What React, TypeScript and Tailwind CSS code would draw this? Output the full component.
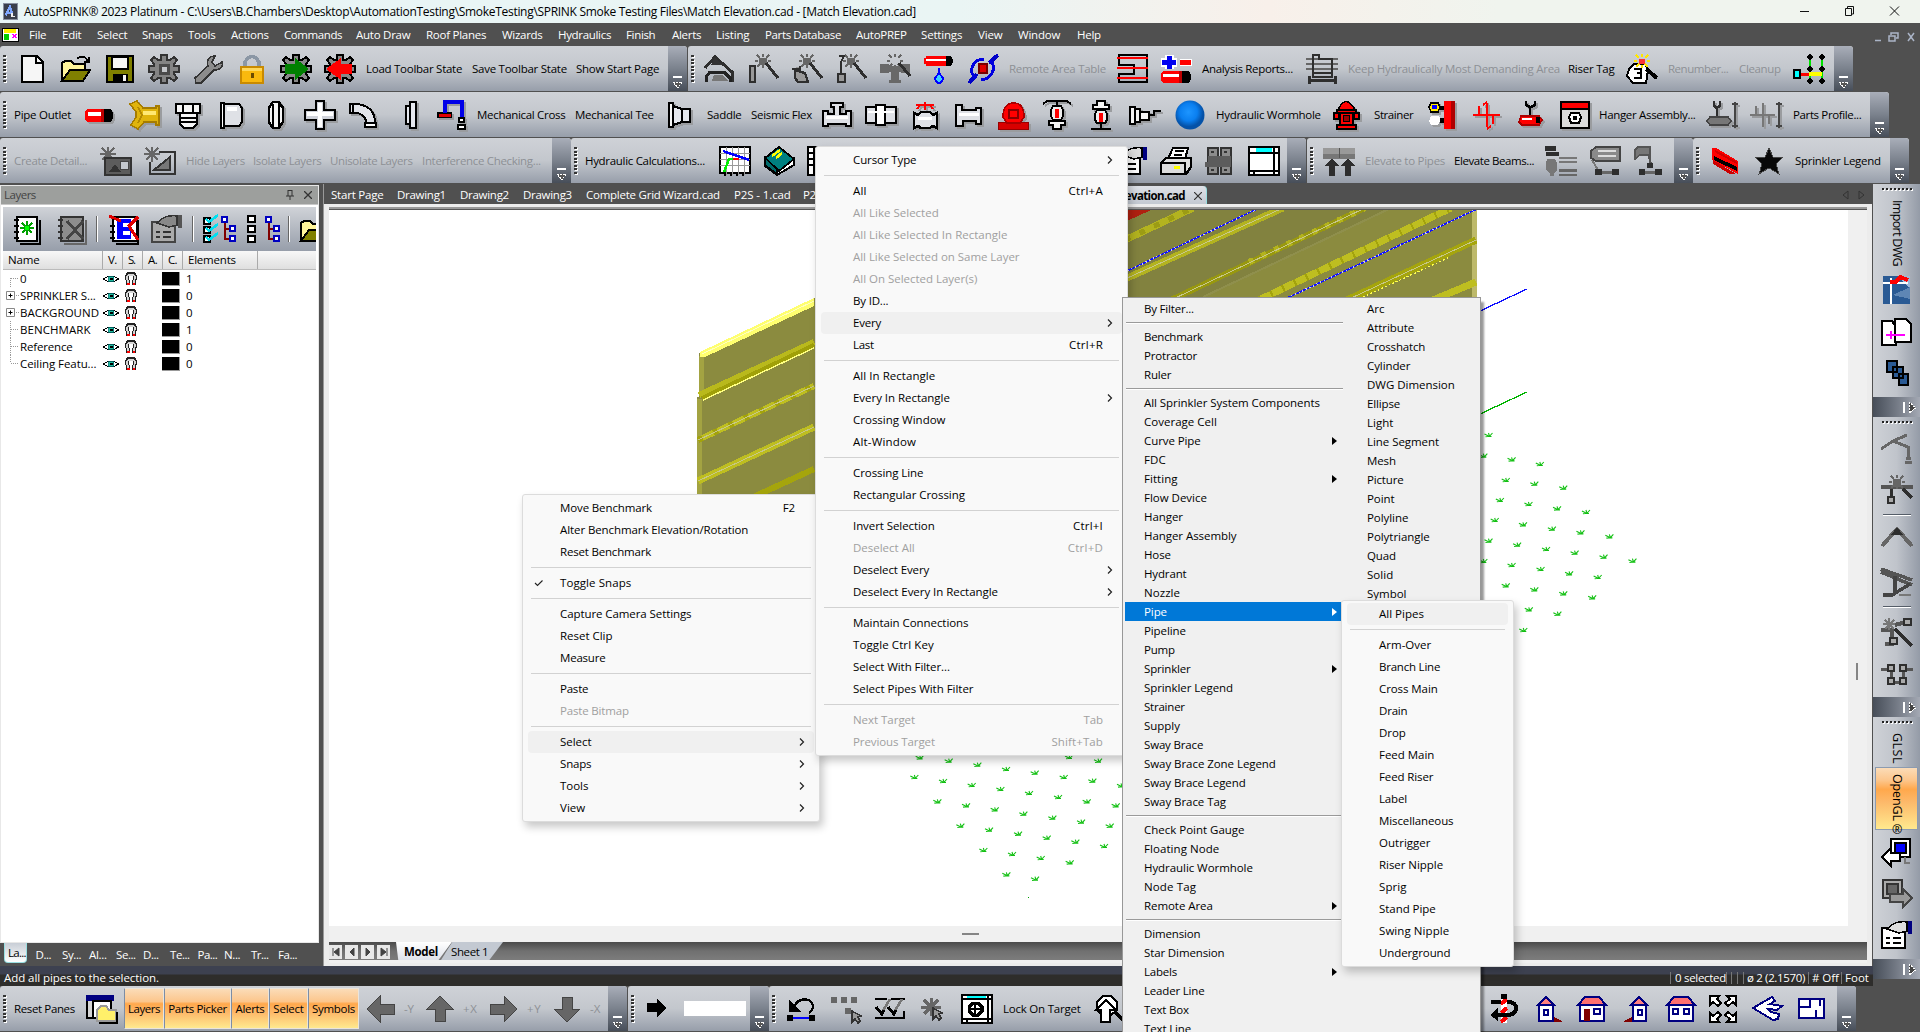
import React, { useLayoutEffect, useRef } from "react";

/* ---------- text ---------- */

const ADVANCE: Record<string, number> = {
  " ": 561, a: 1042, b: 1204, c: 946, d: 1206, e: 1071, f: 641, g: 1206, h: 1159, i: 496, j: 496, k: 1018, l: 496,
  m: 1764, n: 1159, o: 1200, p: 1204, q: 1206, r: 711, s: 869, t: 694, u: 1159, v: 981, w: 1479, x: 940, y: 991,
  z: 926, A: 1321, B: 1174, C: 1268, D: 1436, E: 1036, F: 999, G: 1406, H: 1454, I: 545, J: 731, K: 1188, L: 963,
  M: 1839, N: 1532, O: 1544, P: 1147, Q: 1544, R: 1225, S: 1088, T: 1073, U: 1407, V: 1272, W: 1913, X: 1208,
  Y: 1133, Z: 1169, ".": 444, "-": 819, "(": 618, ")": 618, "+": 1401, "/": 797, "#": 1210, "®": 1700, "ø": 1200,
};

function T({ t, size = 12, w, className = "" }: { t: string; size?: number; w?: number; className?: string }) {
  const ref = useRef<HTMLSpanElement>(null);
  useLayoutEffect(() => {
    const el = ref.current!;
    el.style.letterSpacing = "0px";
    const r = el.getBoundingClientRect();
    const natural = Math.max(r.width, r.height);
    let units = 0;
    for (const ch of t) units += ADVANCE[ch] ?? 1104;
    const target = w ?? (units / 2048) * size;
    el.style.letterSpacing = `${(target - natural) / t.length}px`;
  }, [t, size, w]);
  return (
    <span ref={ref} className={`inline-block whitespace-pre leading-none ${className}`}>
      {t}
    </span>
  );
}

/* ---------- icons (32 x 30 grid) ---------- */

type Shape = [string, string, string?, number?];
const K = "#000";
const G1 = "#2e2e2e";
const G2 = "#666";
const G3 = "#999";
const W = "#f6f6f6";
const R = "#f00";
const N = "#000080";
const gearPath = "M13 1h6v5h3l4-3 3 3-3 4v2h5v6h-5v2l3 4-3 3-4-3h-3v5h-6v-5h-3l-4 3-3-3 3-4v-2H1v-6h5v-2L3 6l3-3 4 3h3z";
const rays = "M16 0v3M16 11v3M8 7h3M21 7h3M10 1l3 3M22 1l-3 3M10 13l3-3M22 13l-3-3";

const ICONS: Record<string, Shape[]> = {
  app: [["M2 1h28v28H2z", "#3a3f4c", "#8890a0", 2], ["M7 22L16 6l4 12M10 18h10", "none", "#7fa8ff", 4], ["M20 18v6h5", "none", "#eee", 3]],
  doc0: [["M1 3h30v25H1z", "#fff", K, 2], ["M3 4h24v7H3z", "#ffee00"], ["M4 14h10v12H4z", "#0c0"], ["M20 14l8 8M28 14l-8 8", "none", "#f0f", 3]],
  new: [["M6 2h15l6 6v20H6z", W, K, 2], ["M20 2v7h7", "none", K, 2]],
  open: [["M2 27V9l3-2h6l3 3h11v5", "#fff59a", K, 2], ["M2 27l8-11h20l-7 11z", "#808000", K, 2], ["M17 5c4-4 9-3 11 3M24 8h5V3", "none", K, 2]],
  save: [["M3 2h26v26H3z", "#808000", K, 2.5], ["M8 3h16v12H8z", W, K, 1.5], ["M9 20h15v8H9z", K], ["M19 21h3v6h-3z", W]],
  gear: [[gearPath, "#848484", "#333", 2], ["M12 11h8v8h-8z", "#c4c6ca", "#4a4a4a", 3]],
  wrench: [["M3 24L16 12c-2-5 1-10 7-10l-3 6 3 4 7-4c2 4-3 9-8 8L9 29H4z", "#8c8c8c", "#333", 1.5]],
  lock: [["M9 15V8q7-11 14 0v7", "none", "#8b97a5", 3.5], ["M5 13h22v16H5z", "#f9b90e", "#c98a00", 1.5], ["M6 14h20v3H6z", "#ffd85a"], ["M15 19h3v5h-3z", "#6b4a00"]],
  gearG: [[gearPath, "#888", K, 2], ["M5 10h10V4l14 11-14 11v-6H5z", "#008000"]],
  gearR: [[gearPath, "#888", K, 2], ["M28 10H17V4L2 15l15 11v-6h11z", R]],
  plan: [["M2 14L12 3l17 15v10", "none", G1, 3], ["M12 3l7 8H8z", "#333"], ["M3 28v-5l4-5h14l6 6v4", "none", "#222", 3], ["M11 21h9l5 6H9z", "#777"]],
  wand1: [[rays, "none", G2, 2], ["M12 4h8v7h-8z", G2], ["M19 9l12 15", "none", G1, 3], ["M3 12h5v16H3z", G3, G1, 2]],
  wand2: [[rays, "none", G2, 2], ["M12 4h8v7h-8z", G2], ["M19 9l12 15", "none", G1, 3], ["M1 15h8v-3M4 16l10 3 3 9H7l-3-4z", G3, G1, 2.5]],
  wand3: [[rays, "none", G2, 2], ["M12 4h8v7h-8z", G2], ["M19 9l12 15", "none", G1, 3], ["M4 2h5l-3 6v11", "none", G1, 2], ["M3 20h7v8H3z", G3, G1, 2]],
  wand4: [[rays, "none", G2, 2], ["M1 10h9v2h12v-2h9v9h-9v-1h-2v8h2v3H10v-3h2v-8h-2v1H1z", "#686868"], ["M20 9l11 13", "none", G1, 3]],
  pipeDrop: [["M3 2h23v10H3z", R], ["M1 4h3v6H1z", R], ["M3 5h20v2H3z", "#fff"], ["M23 2h5q4 5 0 10h-5z", K], ["M16 14v5l4 5q-1 5-4 5t-4-5l4-5", "#3bd0ff", "#00f", 2]],
  orbit: [["M2 29L10 20M22 9L31 1", "none", "#0000c8", 4], ["M9 24C0 18 6 5 17 5M23 6c8 8 1 19-9 20", "none", "#0000e0", 3], ["M12 10h8v9h-8z", "#e00000", "#700", 1.5]],
  table: [["M3 1h28v27H3v-8h15v-9H3z", "none", K, 2.5], ["M1 4h31M1 14h31M1 24h31", "none", R, 2.5]],
  plusPipe: [["M1 8h16M9 1v14", "none", "#fff", 9], ["M2 8h14M9 2v13", "none", "#0000f0", 5], ["M20 5h12v7H20z", "#fff"], ["M20 6h11v5H20z", R], ["M3 17h22v12H3l-2-3v-6z", R], ["M3 20h19v3H3z", "#fff"], ["M21 17h8q4 6 0 12h-8z", K], ["M19 17h3v12h-3z", "#b00"]],
  gridGray: [["M0 5h32M0 10h32M0 15h32", "none", G2, 2.5], ["M7 1h6v4h13v18H7z", "none", G1, 2], ["M7 19h19", "none", G1, 2], ["M2 26h28M3 22v8M29 22v8", "none", G1, 3]],
  bulb3: [["M8 10h11l3 6-2 13H7L1 22l2-7z", "#fff", K, 2], ["M20 15l11 9", "none", K, 4], [rays, "none", "#ffe600", 2.5], ["M13 5h6v5h-6z", "#f33"], ["M8 15h7v4h-4 4v5H8", "none", K, 2]],
  riser: [["M6 20h11", "none", R, 3], ["M17 20V3M29 20V3M17 20v7M29 20v7", "none", "#00e000", 2.5], ["M16 20h13", "none", "#ff0", 4], ["M1 16h6v8H1z", "#0ff", K, 1.5], ["M17 1l2 2-2 2-2-2zM29 1l2 2-2 2-2-2zM17 13l2 2-2 2-2-2zM29 13l2 2-2 2-2-2zM17 25l2 2-2 2-2-2zM29 25l2 2-2 2-2-2z", W, K, 1.5]],
  pipe: [["M3 9h20v13H3l-2-3v-7z", R], ["M4 12h17v4H4z", "#fff"], ["M19 9h8q4 6 0 13h-8z", K], ["M17 9h3v13h-3z", "#b00"]],
  goldTee: [["M2 4l7-3 6 7h13V6h3v19h-3v-3H16l-6 7-7-4 5-8V12z", "#e0b40c", "#a67c00", 1.5], ["M15 11h13v4H15z", "#ffe872"], ["M10 7l4 8-4 8", "none", "#b48a00", 2]],
  cap: [["M4 4h24v9H4z", W, K, 2.5], ["M11 4v8M21 4v8", "none", K, 2], ["M8 13h17v11l-4 4H12l-4-4z", W, K, 2.5], ["M9 18h16M9 22h16", "none", K, 2]],
  halfD: [["M5 3h3v25H5z", "#fff", K, 2], ["M8 4h15l3 4v14l-3 4H8z", "#dfe1e6", K, 2], ["M11 7h10v4H11z", "#fff"]],
  oval: [["M13 2h6l4 6v14l-4 6h-6l-4-6V8z", W, K, 2.5], ["M13 4v23M19 4v23", "none", K, 1.5]],
  cross: [["M12 1h8v9h11v10H20v9h-8v-9H1V10h11z", "#cfd2da", K, 2.5], ["M16 3v24M3 14h26", "none", "#fff", 4]],
  elbow: [["M2 4h7q18 2 18 19h-8Q16 13 8 13H2z", "#e2e4ea", K, 2], ["M5 3v11M17 23h11v4H17z", "#fff", K, 1.5]],
  disc: [["M18 2h6v26h-6zM14 6h4v18h-4z", "#e6e8ee", K, 2]],
  dropArm: [["M1 15h15", "none", K, 6], ["M3 15h12", "none", "#e00000", 3], ["M9 13V2h17v15", "none", "#0000e8", 4], ["M23 18h5v4h-5zM22 25h7v4h-7z", "#fff", K, 1.5]],
  reducer: [["M3 3h4v24H3z", W, K, 2], ["M7 6l9 3v13l-9 3zM16 9h8v13h-8z", "#e6e8ee", K, 2]],
  tee: [["M2 11h5v3h6V7h-3V3h12v4h-3v7h6v-3h5v15h-5v-2H7v2H2z", "#dfe1e6", K, 2.5], ["M5 17h22", "none", "#fff", 3]],
  coupling: [["M1 7h10v16H1zM20 7h11v16H20z", "#dfe1e6", K, 2.5], ["M11 5h9v20h-9z", "#fff", K, 2.5], ["M3 12h26", "none", "#fff", 2]],
  sprayT: [["M7 5h18M8 9l4-5M24 9l-4-5M16 2v8", "none", R, 2], ["M5 13l4 2 3-3h9l3 3 4-2v15l-4-2-3 2h-9l-3-2-4 2z", "#dfe1e6", K, 2.5], ["M9 18h14", "none", "#fff", 3]],
  teeS: [["M3 5h6v5h14V8h5v16h-5v-3H10v5H3z", "#dfe1e6", K, 2.5], ["M6 14h20", "none", "#fff", 3]],
  redBell: [["M1 22h30v7H1z", "#d80000", "#900", 1], ["M6 17q0-14 11-14 10 0 10 14l-4 6H10z", R, "#a00", 1.5], ["M12 10h9v8h-9z", "none", "#800", 2]],
  sprU: [["M2 4l4-3h20l4 3M16 1v4", "none", K, 2], ["M12 6h8l2 4v6l-2 4h-8l-2-4v-6z", "#eee", K, 2], ["M14 9h4v9h-4z", R], ["M8 21h16v4h-4v4h-8v-4H8z", W, K, 2]],
  sprD: [["M12 1h8v4h4v4H8V5h4z", W, K, 2], ["M12 10h8l2 4v6l-2 3h-8l-2-3v-6z", "#eee", K, 2], ["M14 13h4v9h-4z", R], ["M6 29h20M16 24v5", "none", K, 2]],
  sprSide: [["M1 7h5v17H1zM6 9h5v13H6zM11 12h9v8h-9z", W, K, 2], ["M20 15h5v-4h7", "none", K, 2]],
  hydrant: [["M9 8q7-13 15 0v3H9z", R, K, 1.5], ["M7 10h19v3H7zM10 13h13v12H10z", R, K, 1.5], ["M4 13h5v6H4zM24 13h5v6h-5z", R, K, 2], ["M7 25h19v4H7z", R, K, 1.5], ["M13 15h6v6h-6z", "#900", K, 1]],
  gauge: [["M17 1h11v28H17z", R], ["M24 1h4v28h-4z", "#b00000"], ["M4 3h7l2 4-2 5H4L2 7z", "#ffea00", K, 1.5], ["M5 5h5v4H5z", "#00f"], ["M4 16h8l2 4-3 5H4l-2-4z", "#fff"], ["M13 6h4v4h-4zM13 18h4v5h-4z", K]],
  brace: [["M16 3v24M2 15h27M8 6v8M22 16v8M12 5l4-3M20 26l-4 3", "none", R, 2]],
  clevis: [["M11 1v4l4 2v10M20 1v4l-4 2", "none", K, 2.5], ["M6 16h18l3 4-3 5H7l-3-3z", R, "#a00", 1.5], ["M7 18h10v2H7z", "#fff"], ["M21 17h4v6h-4z", K]],
  plate: [["M2 2h28v26H2z", "#dcdcdc", K, 2.5], ["M3 3h26v5H3z", R], ["M2 9h28", "none", K, 1.5], ["M12 13h8l2 4-2 6h-8l-2-6z", "#fff", K, 2], ["M14 16h4v4h-4z", K]],
  hangG: [["M8 1v5l3 2v10M14 1v5l-3 2", "none", G1, 2.5], ["M4 17h18l3 4-3 4H4l-3-4z", "#777", "#444", 1.5], ["M29 2v26M26 4h6M26 26h6", "none", "#444", 2]],
  braceG: [["M13 3v24M0 15h25M6 6v8M19 16v8", "none", "#777", 2], ["M29 2v26M26 4h6M26 26h6", "none", "#444", 2]],
  detail1: [["M8 1v15M0 8h16M2 2l12 12M14 2L2 14", "none", "#666", 2], ["M5 12h26v17H5z", "#5c5c5c", "#333", 2], ["M20 15h8v8h-8z", "#c4c8ce", "#444", 1], ["M9 26l6-8 6 8z", "#333"]],
  detail2: [["M8 1v15M0 8h16M2 2l12 12M14 2L2 14", "none", "#666", 2], ["M15 6h16v22H6V16", "none", "#333", 2.5, ], ["M10 24L26 11v13z", "#777", "#333", 2]],
  graph: [["M1 1h30v26H1z", "#fff", K, 2], ["M7 1v28M13 1v28M19 1v28M25 1v28M1 7h30M1 13h30M1 19h30", "none", "#999", 1], ["M4 5l26 9", "none", "#00f", 2.5], ["M5 26l5-13h4", "none", "#0e0", 2.5], ["M14 13h6", "none", R, 2], ["M6 27v3M12 27v3M18 27v3M24 27v3", "none", K, 2]],
  book: [["M2 12L16 1l15 12-15 12z", "#008080", K, 2], ["M2 12v8l12 9 17-10v-6L16 25z", "#fff", K, 2], ["M2 12v7l12 9v-5z", "#006a6a", K, 1.5], ["M9 10l8-6M13 12l6-5", "none", "#ff0", 2.5]],
  sheet: [["M1 1h30v28H1z", "#fff", K, 2], ["M7 1v28M13 1v28M19 1v28M1 7h30M1 13h30M1 19h30", "none", K, 1.5]],
  props: [["M1 8h23v20H1z", "#fff", K, 2.5], ["M6 9q8-9 20-7v9l-8 2z", "#ddd", K, 1.5], ["M27 1h4v13h-4z", N], ["M5 18h4M12 18h8M5 23h4M12 23h8", "none", K, 2]],
  printer: [["M8 13l5-11h15l-3 11z", "#fff", K, 2], ["M15 5h9M14 9h8", "none", K, 1.5], ["M1 17l5-5h25v9l-5 7H1z", "#ddd", K, 2.5], ["M14 20h6v3h-6z", "#ff0"], ["M2 17h23v10", "none", K, 1.5]],
  doorsG: [["M4 2h10v26H4zM17 2h10v26H17z", "#8c8c8c", "#333", 2], ["M4 10h23v11H1v-5h3z", "#5c5c5c"], ["M7 5h3v2H7zM20 5h3v2h-3zM7 23h3v2H7zM20 23h3v2h-3z", "#333"]],
  win: [["M1 1h30v28H1z", "#fff", K, 2.5], ["M1 7h30M1 25h30M6 25v4M26 1v28", "none", K, 2], ["M8 2h16v4H8z", "#0ff"]],
  elev: [["M0 2h32v6H0z", "#999"], ["M0 8h32v5H0z", "#777"], ["M16 2v10", "none", "#555", 1], ["M2 20l7-8 7 8h-4v10H6V20zM18 20l7-8 7 8h-4v10h-6V20z", G1]],
  elevB: [["M0 0h11v5H0zM1 6h13v4H1z", G1], ["M2 13h8l2 4v7l-3 3v3H5v-3l-4-3v-7z", "#777"], ["M14 12h18M14 16h18", "none", "#777", 2], ["M14 23h18v3H14zM14 28h18v2H14z", "#666"]],
  roll: [["M7 1h24v14H7l-5-3V5z", "#8a8a8a", "#444", 2], ["M9 5h18M9 10h18", "none", "#ddd", 1.5], ["M3 14l6 10", "none", "#777", 2], ["M6 23h7v6H6zM23 23h7v6h-7z", G1], ["M13 26h10", "none", "#666", 3]],
  roll2: [["M5 1h12v8H7l-5 4V4z", "#777", "#555", 1.5], ["M16 9l2 11", "none", "#555", 2.5], ["M14 17h6v5h-6zM6 23h6v6H6zM22 23h7v6h-7z", G1], ["M12 26h10", "none", "#666", 3]],
  beam: [["M3 2h4l22 13v13L3 14z", R], ["M5 10l23 11v4L5 14z", K], ["M4 14l23 14h-6L4 18z", "#c00"], ["M6 5l22 12", "none", "#d00000", 2]],
  star: [["M16 2l4 9h10l-7 7 3 10-10-6-10 6 3-10-7-7h10z", "#080808", "#444", 1]],
  lNew: [["M6 3h20v24H6z", "#fff", K, 2.5], ["M29 6v24H9", "none", K, 2], ["M3 6h5M3 12h5M3 18h5M3 24h5", "none", K, 2.5], ["M16 7v14M9 14h14M11 9l10 10M21 9L11 19", "none", "#00a000", 1.5], ["M14 12h4v4h-4z", "#0f0"]],
  lDel: [["M6 3h22v24H6z", "#8d8d8d", "#333", 2.5], ["M31 6v24H9", "none", "#666", 2], ["M3 6h5M3 12h5M3 18h5M3 24h5", "none", "#333", 2.5], ["M12 7l16 18M28 7L12 25", "none", "#444", 3]],
  lRename: [["M6 3h24v24H6z", "#fff", K, 2.5], ["M31 6v24H9", "none", K, 2], ["M3 12h5M3 18h5M3 24h5", "none", K, 2.5], ["M10 5h14v20H10z", "#00f"], ["M16 9h7v4h-7zM16 17h7v4h-7z", "#fff"], ["M2 2l12 5M31 3l-9 9 9 14", "none", "#e00000", 3]],
  propsG: [["M1 8h23v20H1z", "#aaa", "#444", 2], ["M6 9q8-9 20-7v9l-8 2z", "#888", "#333", 1.5], ["M27 1h4v13h-4z", "#555"], ["M5 18h4M12 18h8M5 23h4M12 23h8", "none", "#333", 2]],
  checks: [["M1 4h6v6H1zM1 13h6v6H1zM1 22h6v6H1z", "#fff", K, 2], ["M3 5l3 3 9-7M3 14l3 3 9-7M3 23l3 3 9-7", "none", "#00e0f0", 2.5], ["M22 6v19h6M22 15h6", "none", "#800000", 2], ["M19 3h5v5h-5zM27 12h5v5h-5zM27 22h5v5h-5z", "#fff", "#0000c0", 2]],
  boxes: [["M1 2h7v6H1zM1 12h7v6H1zM1 22h7v6H1z", "#fff", K, 2], ["M22 6v19h6M22 15h6", "none", "#800000", 2], ["M19 3h5v5h-5zM27 12h5v5h-5zM27 22h5v5h-5z", "#fff", "#0000c0", 2]],
  panes: [["M1 2h22v22H1z", "#d4d4d4", K, 2], ["M0 1h28v6H0z", N], ["M7 7h18v17H7z", "#fff", K, 2], ["M11 16l4-4h5l3 4h7v11H11z", "#fff06a", "#999", 2], ["M31 18v11H13", "none", K, 2]],
  aL: [["M1 15L14 2v8h14v10H14v8z", "#666", "#444", 1]],
  aU: [["M16 2l13 13h-8v12H11V15H3z", "#666", "#444", 1]],
  aR: [["M29 15L16 2v8H2v10h14v8z", "#666", "#444", 1]],
  aD: [["M16 28L3 15h8V3h10v12h8z", "#666", "#444", 1]],
  undo: [["M7 13C12 2 25 4 26 12q0 4-4 7", "none", K, 2.5], ["M2 6v12h12z", K], ["M4 24h22", "none", "#00f", 2.5], ["M0 21h6v6H0zM22 21h6v6h-6z", K]],
  pick3: [["M0 3h6v6H0zM10 3h6v6h-6zM20 3h6v6h-6zM14 14h6v6h-6z", "#666"], ["M21 17v11l3-3 3 4 2-2-2-4 3-1z", "#999", "#333", 1.5]],
  checkW: [["M0 5h12M16 5h14M0 24h30M29 17v8", "none", K, 2], ["M6 20L15 5M18 20l9-15", "none", "#777", 2.5], ["M1 13l6 7 2-4M13 13l6 7 2-4", "none", K, 3]],
  burst: [["M12 4v18M2 13h20M5 6l14 14M19 6L5 20", "none", "#666", 3], ["M14 14v11l3-3 3 4 2-2-2-4 3-1z", "#999", "#333", 1.5]],
  target: [["M1 1h30v28H1z", "#fff", K, 2.5], ["M1 5h30M1 25h30M6 25v4M27 1v28", "none", K, 2], ["M6 2h19v2H6z", "#0ff"], ["M12 9h5l4 4v4l-4 4h-5l-4-4v-4z", "#fff", K, 3], ["M14 9v6H8M14 21v-6h7", "none", K, 2.5]],
  zoomUp: [["M4 16V8l6-6h8l6 6v8l-6 5H9z", "#fff", K, 2], ["M13 6L3 16h5v12h9V16h6z", "#fff", K, 2], ["M22 18l9 9", "none", K, 4]],
  rotate: [["M12 3h6v26h-6z", "#fff"], ["M18 5l-6 5M18 14l-6 5M18 23l-6 5", "none", R, 4], ["M2 8h10M18 8q9 0 9 6 0 7-10 7H7", "none", K, 4], ["M9 14v13L1 21z", K], ["M12 0h6v5h-6z", K]],
  h1: [["M7 11h14v16H7z", "#fff", N, 2.5], ["M6 11l8-8 8 8z", "#ff8080", N, 2], ["M12 16h4v5h-4z", "#fff", N, 2], ["M22 23l8 4v1h-8z", "#800000"]],
  h2: [["M4 11h24v16H4z", "#fff", N, 2.5], ["M2 11l7-8h14l7 8z", "#ff7070", N, 2], ["M8 15h6v12H8z", "#800000"], ["M18 15h6v5h-6z", "#fff", N, 2]],
  h3: [["M11 11h13v16H11z", "#fff", N, 2.5], ["M9 11l8-8 8 8z", "#ff8080", N, 2], ["M16 16h4v5h-4z", "#fff", N, 2], ["M10 23l-8 4v1h8z", "#800000"]],
  h4: [["M4 11h24v16H4z", "#fff", N, 2.5], ["M2 11l7-8h14l7 8z", "#ff7070", N, 2], ["M8 15h5v5H8zM19 15h5v5h-5z", "#fff", N, 2]],
  expand: [["M1 2h9L8 5l4 4-3 3-5-4-3 3zM27 2h-9l3 3-5 4 3 3 5-4 3 3zM1 28h9l-2-3 4-4-3-3-5 4-3-3zM27 28h-9l3-3-5-4 3-3 5 4 3-3z", "#fff", K, 2]],
  iso: [["M1 14L20 3l3 4-5 3 12 2-5 4-9-1 3 3 8 2-1 5-5 1z", "#fff", N, 2]],
  floor: [["M2 5h25v19H2z", "#fff", N, 2.5], ["M2 13h7M13 5v8h-4M19 16v8M23 5v7", "none", N, 2.5]],
  dwg: [["M2 1h27v28H2z", "#2a5a94"], ["M16 1h13v12z", "#9db8d8"], ["M12 20l17-8v12z", "#5f86b4"], ["M10 3v26M2 8h25", "none", "#fff", 2], ["M9 7h6l4-5 8 3", "none", R, 4]],
  docs2: [["M1 4h10l4 5v19H1z", "#fff", K, 2.5], ["M14 2h11l5 5v18H14z", "#fff", K, 2.5], ["M5 18h19M10 14v8", "none", "#f0f", 2.5]],
  cubes: [["M6 2h10v11H6zM12 8h10v11H12zM18 15h9v11h-9z", "#2a5a94", K, 2]],
  v1: [["M0 16L12 8l14-6M12 8l15 6v12M24 29h7M25 25h5", "none", "#666", 3]],
  v2: [["M0 12h32", "none", "#555", 4], [rays, "none", "#666", 2], ["M12 4h8v8h-8z", "#666"], ["M10 14v10M22 14l9 9", "none", G1, 3], ["M7 22h6v6H7z", "#aaa", G1, 2]],
  v3: [["M1 24L16 7l15 17", "none", "#666", 4], ["M10 13l6-8 6 8z", G1]],
  v4: [["M0 2l31 11M0 5l31 13", "none", "#555", 3.5], ["M14 9v17M2 28h9l18-11", "none", "#444", 3.5], ["M18 28h12", "none", "#777", 2]],
  v5: [["M0 13h11v14H4M14 8l14-4", "none", "#555", 4], ["M8 1v12M2 7h12M4 3l9 9M13 3L4 12", "none", "#777", 1.5], ["M14 12l17 17", "none", G1, 4], ["M9 21h7v6H9zM23 2h7v6h-7z", "#aaa", G1, 2]],
  v6: [["M0 9h10v13h12V9h10", "none", "#555", 3], ["M7 5h6v6H7zM19 5h6v6h-6zM7 18h6v6H7zM19 18h6v6h-6z", "#aaa", G1, 2]],
  monL: [["M10 2h19v18H10z", "#fff", K, 2.5], ["M14 6h11v10H14z", "#00f", K, 2], ["M1 20l9-9v5h9v8h-9v5z", "#fff", K, 2], ["M24 20v6h5", "none", "#777", 2]],
  monR: [["M2 2h19v18H2z", "#aaa", "#333", 2.5], ["M6 6h11v10H6z", "#666", "#333", 2], ["M31 20l-9-9v5H9v8h13v5z", "#999", "#444", 2]],
  eye: [["M1 15Q16 1 31 15 16 29 1 15z", "#fff", K, 2.5], ["M11 9h10v12H11z", "#27c0a0", "#077", 2], ["M14 13h5v5h-5z", K]],
  magnet: [["M9 28V20Q1 6 16 5q15 1 7 15v8", "none", "#222", 8], ["M9 25V20Q2 8 16 7q14 1 7 13v5", "none", "#d4d4d4", 4], ["M7 24h6v4H7zM20 24h6v4h-6z", R]],
};

function Icon({ n, w = 32, h = 30, shadow }: { n: string; w?: number; h?: number; shadow?: boolean }) {
  return (
    <svg
      width={w}
      height={h}
      viewBox="0 0 32 30"
      preserveAspectRatio="none"
      shapeRendering="crispEdges"
      className={`block shrink-0 overflow-visible ${shadow ? "drop-shadow-[2px_2px_0_#9a9c9f]" : ""}`}
    >
      {ICONS[n].map(([d, fill, stroke, sw], i) => (
        <path key={i} d={d} fill={fill} stroke={stroke ?? "none"} strokeWidth={sw ?? 0} />
      ))}
    </svg>
  );
}

/* ---------- toolbars ---------- */

type Item = { x: number; t?: string; i?: string; dim?: boolean; el?: React.ReactNode };
const tx = (x: number, t: string, dim = false): Item => ({ x, t, dim });
const ic = (x: number, ...names: string[]): Item[] => names.map((i, k) => ({ x: x + k * 44, i }));

function Overflow() {
  return (
    <div className="flex h-full w-[19px] shrink-0 flex-col items-center justify-end rounded-tr bg-gradient-to-b from-[#a9aeb9] via-[#7b828d] to-[#474e59] pb-[2px]">
      <svg width="11" height="13" viewBox="0 0 11 13" shapeRendering="crispEdges">
        <path d="M1 1h9" stroke="#fff" strokeWidth="1.5" />
        <path d="M1 6h9L6 12z" fill="#555" stroke="#fff" strokeWidth="1" strokeDasharray="2 1" />
      </svg>
    </div>
  );
}

function Bar({ from, to, items, grip = true, shadow }: { from: number; to: number; items: Item[]; grip?: boolean; shadow?: boolean }) {
  const start = items[0].x - from - (grip ? 7 : 0);
  return (
    <div
      className="flex h-full shrink-0 overflow-hidden rounded-t-[3px] bg-gradient-to-b from-[#cfd2d7] via-[#c3c7cd] to-[#979eaa]"
      style={{ width: to - from }}
    >
      <div className="flex min-w-0 flex-1 items-center">
        {grip && (
          <div className="ml-[3px] flex w-1 shrink-0 flex-col gap-[1.6px]">
            {[0, 1, 2, 3, 4, 5, 6, 7].map((k) => (
              <i key={k} className="block h-[2px] w-[3px] bg-[#333] shadow-[1px_1px_0_#fff]" />
            ))}
          </div>
        )}
        <div className="shrink-0" style={{ width: start }} />
        {items.map((it, k) => {
          const next = items[k + 1]?.x;
          return (
            <div key={k} className="shrink-0" style={{ width: next ? next - it.x : undefined }}>
              {it.el ?? (it.i ? <Icon n={it.i} shadow={shadow} /> : <T t={it.t!} size={11.55} className={it.dim ? "text-[#8d9095]" : "text-black"} />)}
            </div>
          );
        })}
      </div>
      <Overflow />
    </div>
  );
}

const Ball = (
  <svg width="30" height="30" viewBox="0 0 30 30" className="block">
    <defs>
      <radialGradient id="ball" cx="0.45" cy="0.4">
        <stop offset="0" stopColor="#1d95ff" />
        <stop offset="0.6" stopColor="#0a7ff0" />
        <stop offset="1" stopColor="#0552a8" />
      </radialGradient>
    </defs>
    <circle cx="15" cy="15" r="14.5" fill="url(#ball)" />
  </svg>
);

const ROW1A = [...ic(16, "new", "open", "save", "gear", "wrench", "lock", "gearG", "gearR"), tx(366, "Load Toolbar State"), tx(472, "Save Toolbar State"), tx(576, "Show Start Page")];
const ROW1B = [
  ...ic(703, "plan", "wand1", "wand2", "wand3", "wand4", "pipeDrop", "orbit"), tx(1009, "Remote Area Table", true), ...ic(1116, "table", "plusPipe"),
  tx(1202, "Analysis Reports..."), ...ic(1306, "gridGray"), tx(1348, "Keep Hydraulically Most Demanding Area", true), tx(1568, "Riser Tag"),
  ...ic(1626, "bulb3"), tx(1668, "Renumber...", true), tx(1739, "Cleanup", true), ...ic(1793, "riser"),
];
const ROW2 = [
  tx(14, "Pipe Outlet"), ...ic(84, "pipe", "goldTee", "cap", "halfD", "oval", "cross", "elbow", "disc", "dropArm"), tx(477, "Mechanical Cross"),
  tx(575, "Mechanical Tee"), ...ic(666, "reducer"), tx(707, "Saddle"), tx(751, "Seismic Flex"),
  ...ic(821, "tee", "coupling", "sprayT", "teeS", "redBell", "sprU", "sprD", "sprSide"), { x: 1175, el: Ball }, tx(1216, "Hydraulic Wormhole"),
  ...ic(1330, "hydrant"), tx(1374, "Strainer"), ...ic(1427, "gauge", "brace", "clevis", "plate"), tx(1599, "Hanger Assembly..."), ...ic(1706, "hangG", "braceG"), tx(1793, "Parts Profile..."),
];
const ROW3A = [tx(14, "Create Detail...", true), ...ic(100, "detail1", "detail2"), tx(186, "Hide Layers", true), tx(253, "Isolate Layers", true), tx(330, "Unisolate Layers", true), tx(422, "Interference Checking...", true)];
const ROW3B = [tx(585, "Hydraulic Calculations..."), ...ic(719, "graph", "book", "sheet"), ...ic(1116, "props", "printer", "doorsG", "win")];
const ROW3C = [...ic(1323, "elev"), tx(1365, "Elevate to Pipes", true), tx(1454, "Elevate Beams..."), ...ic(1545, "elevB", "roll", "roll2")];
const ROW3D = [...ic(1709, "beam", "star"), tx(1795, "Sprinkler Legend")];

const toggle = (x: number, t: string, w: number): Item => ({
  x,
  el: (
    <div
      className="flex h-[41px] items-center justify-center border border-[#e9e4dc] border-l-[#7c8da5] bg-[linear-gradient(#fbdcb8,#fcc68c_32%,#ffa84c_38%,#fdb869_60%,#ffe98e)]"
      style={{ width: w }}
    >
      <T t={t} size={11.55} />
    </div>
  ),
});

const BOT1 = [
  tx(14, "Reset Panes"), ...ic(86, "panes"), toggle(124, "Layers", 40), toggle(164, "Parts Picker", 67), toggle(231, "Alerts", 38),
  toggle(269, "Select", 39), toggle(308, "Symbols", 51), ...ic(366, "aL"), tx(404, "-Y", true), ...ic(424, "aU"), tx(463, "+X", true),
  ...ic(488, "aR"), tx(527, "+Y", true), ...ic(551, "aD"), tx(590, "-X", true),
];
const BOT2: Item[] = [
  { x: 647, el: <svg width="19" height="18" viewBox="0 0 19 18" className="block -mt-[2px]" shapeRendering="crispEdges"><path d="M0 4h10V0l9 9-9 9v-5H0z" /></svg> },
  { x: 684, el: <div className="h-[15px] w-[62px] bg-white" /> },
];
const BOT3 = [
  ...ic(787, "undo", "pick3", "checkW"), ...ic(919, "burst"), ...ic(961, "target"), tx(1003, "Lock On Target"), ...ic(1093, "zoomUp"), ...ic(1489, "rotate"),
  ...ic(1532, "h1", "h2"), ...ic(1622, "h3"), ...ic(1665, "h4", "expand"), ...ic(1752, "iso"), ...ic(1797, "floor"),
];

/* ---------- right dock ---------- */

type VItem = { y: number; el: React.ReactNode };
const vi = (y: number, n: string, h = 30): VItem => ({ y, el: <Icon n={n} h={h} /> });
const sep = (y: number): VItem => ({ y, el: <div className="h-[2px] w-7 border-t border-[#555d68] bg-white" /> });

function Dock({ from, to, items }: { from: number; to: number; items: VItem[] }) {
  return (
    <div className="flex w-[47px] shrink-0 flex-col overflow-hidden bg-gradient-to-r from-[#cfd2d7] via-[#c0c4cb] to-[#949ba7]" style={{ height: to - from }}>
      <div className="flex min-h-0 flex-1 flex-col items-center">
        <div className="mt-1 flex h-1 shrink-0 gap-[2px]">
          {[0, 1, 2, 3, 4, 5, 6, 7].map((k) => (
            <i key={k} className="block h-[2px] w-[2px] bg-[#222] shadow-[1px_1px_0_#fff]" />
          ))}
        </div>
        <div className="shrink-0" style={{ height: items[0].y - from - 8 }} />
        {items.map((it, k) => {
          const next = items[k + 1]?.y;
          return (
            <div key={k} className="shrink-0" style={{ height: next ? next - it.y : undefined }}>
              {it.el}
            </div>
          );
        })}
      </div>
      <div className="flex h-5 shrink-0 items-center justify-end bg-gradient-to-r from-[#474e59] to-[#a4a9b4] pr-1">
        <svg width="13" height="11" viewBox="0 0 13 11" shapeRendering="crispEdges">
          <path d="M1 0v11" stroke="#fff" strokeWidth="1.5" />
          <path d="M6 0v11l7-5z" fill="#444" stroke="#fff" strokeWidth="1" strokeDasharray="2 1" />
        </svg>
      </div>
    </div>
  );
}

const Vert = ({ t, w }: { t: string; w: number }) => <T t={t} w={w} className="text-[12.5px] [writing-mode:vertical-rl]" />;

/* ---------- menus ---------- */

type M = { t: string; k?: string; sub?: boolean; dim?: boolean; hot?: boolean; check?: boolean } | "-";
const d = (t: string, k?: string): M => ({ t, k, dim: true });
const s = (t: string, hot = false): M => ({ t, sub: true, hot });
const m = (t: string, k?: string): M => ({ t, k });

const CONTEXT: M[] = [
  m("Move Benchmark", "F2"), m("Alter Benchmark Elevation/Rotation"), m("Reset Benchmark"), "-", { t: "Toggle Snaps", check: true }, "-",
  m("Capture Camera Settings"), m("Reset Clip"), m("Measure"), "-", m("Paste"), d("Paste Bitmap"), "-", s("Select", true), s("Snaps"), s("Tools"), s("View"),
];
const SELECT: M[] = [
  s("Cursor Type"), "-", m("All", "Ctrl+A"), d("All Like Selected"), d("All Like Selected In Rectangle"), d("All Like Selected on Same Layer"),
  d("All On Selected Layer(s)"), m("By ID..."), s("Every", true), m("Last", "Ctrl+R"), "-", m("All In Rectangle"), s("Every In Rectangle"),
  m("Crossing Window"), m("Alt-Window"), "-", m("Crossing Line"), m("Rectangular Crossing"), "-", m("Invert Selection", "Ctrl+I"),
  d("Deselect All", "Ctrl+D"), s("Deselect Every"), s("Deselect Every In Rectangle"), "-", m("Maintain Connections"), m("Toggle Ctrl Key"),
  m("Select With Filter..."), m("Select Pipes With Filter"), "-", d("Next Target", "Tab"), d("Previous Target", "Shift+Tab"),
];
const PIPES: M[] = [
  { t: "All Pipes", hot: true }, "-", m("Arm-Over"), m("Branch Line"), m("Cross Main"), m("Drain"), m("Drop"), m("Feed Main"), m("Feed Riser"),
  m("Label"), m("Miscellaneous"), m("Outrigger"), m("Riser Nipple"), m("Sprig"), m("Stand Pipe"), m("Swing Nipple"), m("Underground"),
];

function Menu({ items, className }: { items: M[]; className: string }) {
  return (
    <div className={`absolute rounded-[3px] border border-[#dcdcdc] bg-[#f9f9f9] py-[2px] shadow-[3px_5px_8px_rgba(0,0,0,0.22)] ${className}`}>
      {items.map((it, i) =>
        it === "-" ? (
          <div key={i} className="flex h-[9px] items-center px-2">
            <div className="h-px w-full bg-[#d2d2d2]" />
          </div>
        ) : (
          <div
            key={i}
            className={`mx-[5px] flex h-[22px] items-center rounded-[4px] pr-[19px] pl-8 ${it.hot ? "bg-[#f0f0f0]" : ""} ${it.dim ? "text-[#a0a0a0]" : "text-black"}`}
          >
            {it.check && (
              <svg width="10" height="8" viewBox="0 0 10 8" className="-ml-[26px] mr-4 shrink-0 overflow-visible">
                <path d="M1 4l2.500 2.500 5-5" fill="none" stroke="#222" strokeWidth="1.1" />
              </svg>
            )}
            <T t={it.t} />
            <span className="flex-1" />
            {it.k && <T t={it.k} />}
            {it.sub && (
              <svg width="6" height="10" viewBox="0 0 6 10" className="-mr-[10px]">
                <path d="M1 1.500l3.500 3.500L1 8.500" fill="none" stroke="#222" strokeWidth="1.2" />
              </svg>
            )}
          </div>
        )
      )}
    </div>
  );
}

const EVERY: (string | "-")[] = [
  "By Filter...", "-", "Benchmark", "Protractor", "Ruler", "-", "All Sprinkler System Components", "Coverage Cell", "Curve Pipe>", "FDC", "Fitting>",
  "Flow Device", "Hanger", "Hanger Assembly", "Hose", "Hydrant", "Nozzle", "Pipe>", "Pipeline", "Pump", "Sprinkler>", "Sprinkler Legend", "Strainer",
  "Supply", "Sway Brace", "Sway Brace Zone Legend", "Sway Brace Legend", "Sway Brace Tag", "-", "Check Point Gauge", "Floating Node",
  "Hydraulic Wormhole", "Node Tag", "Remote Area>", "-", "Dimension", "Star Dimension", "Labels>", "Leader Line", "Text Box", "Text Line",
];
const EVERY2 = [
  "Arc", "Attribute", "Crosshatch", "Cylinder", "DWG Dimension", "Ellipse", "Light", "Line Segment", "Mesh", "Picture", "Point", "Polyline",
  "Polytriangle", "Quad", "Solid", "Symbol",
];

function EveryMenu() {
  return (
    <div className="absolute top-[297px] left-[1122px] flex h-[735px] w-[359px] overflow-hidden border border-b-0 border-[#989898] bg-[#f0f0f0] pt-px shadow-[3px_5px_2px_rgba(0,0,0,0.4)]">
      <div className="w-[220px] shrink-0">
        {EVERY.map((raw, i) => {
          if (raw === "-")
            return (
              <div key={i} className="flex h-[9px] items-center pl-[3px]">
                <div className="h-[2px] w-full border-t border-[#9a9a9a] bg-white" />
              </div>
            );
          const sub = raw.endsWith(">");
          const hot = raw === "Pipe>";
          return (
            <div key={i} className={`ml-[2px] flex h-[19px] w-[216px] items-center justify-between pr-1 pl-[19px] ${hot ? "bg-[#0078d7] text-white" : ""}`}>
              <T t={sub ? raw.slice(0, -1) : raw} />
              {sub && (
                <svg width="5" height="8" viewBox="0 0 5 8">
                  <path d="M0 0l5 4-5 4z" fill={hot ? "#fff" : "#000"} />
                </svg>
              )}
            </div>
          );
        })}
      </div>
      <div className="pl-6">
        {EVERY2.map((t) => (
          <div key={t} className="flex h-[19px] items-center">
            <T t={t} />
          </div>
        ))}
      </div>
    </div>
  );
}

/* ---------- drawing ---------- */

const MARKS_R = [
  1073, 735, 1058, 797, 1140, 808, 1222, 822, 1123, 870, 1206, 881, 1290, 893, 1106, 930, 1189, 942, 1272, 955, 1356, 966, 1091, 990, 1173, 1003, 1257,
  1016, 1340, 1027, 1424, 1039, 1073, 1052, 1156, 1064, 1240, 1077, 1323, 1088, 1407, 1100, 1491, 1112, 1058, 1113, 1140, 1125, 1224, 1137, 1307, 1150,
  1390, 1161, 1123, 1186, 1206, 1198, 1290, 1210, 1374, 1222, 1190, 1258, 1273, 1271, 1174, 1320,
];
const MARKS_B = [
  332, 202, 419, 212, 505, 224, 591, 237, 677, 248, 764, 261, 850, 272, 936, 286, 780, 201, 867, 212, 316, 261, 402, 273, 488, 285, 574, 297, 660, 309, 747,
  321, 833, 334, 920, 346, 385, 334, 471, 346, 557, 358, 643, 371, 730, 383, 816, 395, 902, 407, 454, 407, 540, 419, 627, 431, 713, 443, 799, 455, 885, 468,
  523, 480, 609, 492, 695, 504, 782, 517, 592, 553, 678, 566,
];
const pairs = (a: number[], fx: (n: number) => number, fy: (n: number) => number) =>
  a.filter((_, i) => i % 2 === 0).map((x, i) => [fx(x), fy(a[i * 2 + 1])]);
const MARKS = [
  ...pairs(MARKS_R, (x) => 1120 + x / 2.904, (y) => 190 + y / 3),
  ...pairs(MARKS_B, (x) => 810 + x / 3, (y) => 690 + y / 3),
];

function Drawing() {
  const ln = (x1: number, y1: number, x2: number, y2: number, c: string, w: number, dash?: string) => (
    <line x1={x1} y1={y1} x2={x2} y2={y2} stroke={c} strokeWidth={w} strokeDasharray={dash} />
  );
  return (
    <svg width="1519" height="716" viewBox="330 210 1519 716" className="block shrink-0 bg-white" shapeRendering="crispEdges">
      <path d="M700 353L1000 210H1478V494H698V397H700z" fill="#8b8b3f" />
      <path d="M1128 210H1390L1200 300H1128z" fill="#82823f" />
      <path d="M700 356h5v36h-5zM698 399h5v95h-5z" fill="#a3a342" />
      <path d="M701 352L815 298v8L706 357h-5z" fill="#ffff70" />
      {ln(703, 354, 815, 301, "#ffffc0", 1)}
      {ln(700, 395, 815, 342, "#b9b91c", 6)}
      {ln(703, 398, 815, 345, "#a0a008", 4)}
      {ln(704, 400, 815, 348, "#ffff80", 1.4)}
      {ln(699, 440, 815, 386, "#bebe20", 6)}
      {ln(699, 440, 815, 386, "#a3a30c", 6, "5 12")}
      {ln(699, 481, 815, 427, "#bebe20", 7)}
      {ln(750, 499, 815, 469, "#a5a50c", 6)}
      {ln(699, 440, 815, 386, "#c6c68a", 1)}
      {ln(699, 481, 815, 427, "#c6c68a", 1)}
      <path d="M1473 210h5v87h-5z" fill="#bdb96a" />
      <path d="M1128 210h24l-24 11z" fill="#b02010" />
      {ln(1126, 240, 1194, 208, "#b3b31f", 7)}
      {ln(1126, 240, 1194, 208, "#9c9c14", 5, "6 10")}
      {ln(1126, 279, 1284, 208, "#b3b31f", 7)}
      {ln(1126, 279, 1284, 208, "#c6c68a", 1)}
      {ln(1126, 272, 1260, 208, "#c8c8ff", 1.6)}
      {ln(1126, 272, 1260, 208, "#1010ff", 1.6, "3 1")}
      {ln(1172, 300, 1366, 208, "#98980f", 6)}
      {ln(1250, 262, 1366, 208, "#b3b31c", 6, "5 9")}
      {ln(1172, 300, 1366, 208, "#c6c68a", 1)}
      {ln(1204, 297, 1390, 209, "#8f8f4c", 2)}
      {ln(1260, 300, 1452, 208, "#bebe20", 7)}
      {ln(1260, 300, 1452, 208, "#a3a30c", 7, "2 11")}
      {ln(1286, 299, 1478, 209, "#c8c8ff", 1.6)}
      {ln(1286, 299, 1478, 209, "#1010ff", 1.6, "3 1")}
      {ln(1348, 300, 1477, 240, "#a5a50c", 7)}
      {ln(1348, 300, 1477, 240, "#c6c68a", 1)}
      {ln(1364, 297, 1451, 257, "#ffff50", 1.2, "2 2")}
      {ln(1434, 300, 1477, 282, "#bebe20", 7)}
      {ln(1481, 311, 1528, 289, "#1010ff", 1.3)}
      {ln(1481, 414, 1528, 392, "#00b400", 1.3)}
      {MARKS.map(([x, y], i) => (
        <path key={i} d={`M${x - 4} ${y - 1}l4 2M${x - 3} ${y + 1.8}l4-.5 3-3.300M${x} ${y - 2}l1 3.300M${x + 1} ${y + 1.500}h2`} stroke="#12c012" strokeWidth="1.1" fill="none" shapeRendering="auto" />
      ))}
      <path d="M1029 897h1v1h-1z" fill="#00a000" />
    </svg>
  );
}

/* ---------- layers panel ---------- */

const LAYERS: [string, string, boolean][] = [
  ["0", "1", false], ["SPRINKLER S...", "0", true], ["BACKGROUND", "0", true], ["BENCHMARK", "1", false], ["Reference", "0", false], ["Ceiling Featu...", "0", false],
];
const HEADS: [string, number][] = [["Name", 100], ["V.", 20], ["S.", 20], ["A.", 20], ["C.", 20], ["Elements", 75]];

function LayersPanel() {
  return (
    <div className="flex w-[319px] shrink-0 flex-col pt-px">
      <div className="flex h-[758px] flex-col border border-[#e8e8e8] bg-white">
        <div className="flex h-[19px] shrink-0 items-center border-b border-[#c8c8c8] bg-[#9d9f9d] pr-[6px] pl-[3px] text-[#444]">
          <T t="Layers" size={11.55} />
          <span className="flex-1" />
          <svg width="8" height="10" viewBox="0 0 8 10" className="mr-[10px]"><path d="M2 0v6M6 0v6M2 .5h4M0 6h8M4 6v4" stroke="#333" fill="none" /></svg>
          <svg width="8" height="8" viewBox="0 0 8 8"><path d="M0 0l8 8M8 0L0 8" stroke="#333" strokeWidth="1.3" /></svg>
        </div>
        <div className="mx-[2px] mt-[2px] flex h-11 shrink-0 items-center overflow-hidden bg-gradient-to-b from-[#d0d3d8] to-[#979eaa] pl-2">
          <Icon n="lNew" />
          <div className="w-3 shrink-0" />
          <Icon n="lDel" />
          <div className="mx-[9px] h-[26px] w-[2px] shrink-0 border-l border-[#666] bg-white" />
          <Icon n="lRename" />
          <div className="w-3 shrink-0" />
          <Icon n="propsG" />
          <div className="mx-[9px] h-[26px] w-[2px] shrink-0 border-l border-[#666] bg-white" />
          <Icon n="checks" />
          <div className="w-3 shrink-0" />
          <Icon n="boxes" />
          <div className="mx-[9px] h-[26px] w-[2px] shrink-0 border-l border-[#666] bg-white" />
          <Icon n="open" />
        </div>
        <div className="mx-[2px] flex h-[19px] shrink-0 border-b border-[#bbb] bg-gradient-to-b from-[#f8f8f8] to-[#dfdfdf]">
          {HEADS.map(([t, w]) => (
            <div key={t} className="flex shrink-0 items-center border-r border-[#aaa] pl-[5px]" style={{ width: w }}>
              <T t={t} />
            </div>
          ))}
        </div>
        {LAYERS.map(([name, count, plus], i) => (
          <div key={name} className="flex h-[17px] shrink-0 items-center">
            <div className="flex h-full w-[19px] shrink-0 items-center pl-[5px]">
              {plus ? (
                <svg width="14" height="9" viewBox="0 0 14 9"><path d="M.5 .5h8v8h-8z" fill="#fff" stroke="#888" /><path d="M2.500 4.500h4M4.500 2.500v4" stroke="#000" /><path d="M10 4.500h4" stroke="#999" strokeDasharray="1 1" /></svg>
              ) : (
                <svg width="14" height="17" viewBox="0 0 14 17"><path d={`M4.5 ${i === 0 ? 8 : 0}V${i === 5 ? 8 : 17}M5 8.5h7`} stroke="#999" strokeDasharray="1 1" fill="none" /></svg>
              )}
            </div>
            <div className="w-[83px] shrink-0"><T t={name} /></div>
            <div className="w-[21px] shrink-0"><Icon n="eye" w={16} h={12} /></div>
            <div className="w-[38px] shrink-0"><Icon n="magnet" w={14} h={15} /></div>
            <div className="mr-[6px] h-[14px] w-[18px] shrink-0 border-r border-b border-[#999] bg-black" />
            <T t={count} />
          </div>
        ))}
      </div>
      <div className="flex h-[23px] items-start text-white">
        <div className="ml-1 flex h-5 w-[23px] items-center overflow-hidden rounded-b border border-t-0 border-[#9adfe2] bg-gradient-to-b from-[#c8ced6] to-white pl-[3px] text-black">
          <T t="La..." size={11} />
        </div>
        {[["D...", 8.5, 26.5], ["Sy...", 0, 27], ["Al...", 0, 27], ["Se...", 0, 27], ["D...", 0, 27], ["Te...", 0, 27.5], ["Pa...", 0, 26.5], ["N...", 0, 27], ["Tr...", 0, 27], ["Fa...", 0, 30]].map(([t, ml, w], i) => (
          <div key={i} className="flex h-[23px] shrink-0 items-center" style={{ width: w, marginLeft: ml }}>
            <T t={t as string} size={11.55} />
          </div>
        ))}
      </div>
    </div>
  );
}

/* ---------- document area ---------- */

const TABS: [string, number][] = [["Start Page", 66], ["Drawing1", 63], ["Drawing2", 63], ["Drawing3", 63], ["Complete Grid Wizard.cad", 148], ["P2S - 1.cad", 69], ["P2", 13]];

function DocumentArea() {
  return (
    <div className="ml-[4px] flex w-[1549px] shrink-0 flex-col border-l border-[#999]">
      <div className="flex h-5 items-center bg-[#505050] pt-[2px] pl-[7px] text-white">
        {TABS.map(([t, w]) => (
          <div key={t} className="shrink-0" style={{ width: w }}>
            <T t={t} size={11.6} />
          </div>
        ))}
        <div className="ml-auto flex h-full items-end">
          <div className="mr-[635px] flex h-[18px] w-[140px] items-center justify-end gap-[9px] rounded-tr border-r border-[#9adfe2] bg-gradient-to-b from-[#dfe2e8] to-[#c3c9d2] pt-px pr-1 text-black">
            <T t="evation.cad" size={12} className="font-bold" />
            <svg width="8" height="8" viewBox="0 0 8 8"><path d="M0 0l8 8M8 0L0 8" stroke="#333" strokeWidth="1.2" /></svg>
          </div>
          <svg width="24" height="10" viewBox="0 0 24 10" className="mr-[6px] mb-1"><path d="M6 1v8L1 5zM17 1v8l5-4z" fill="none" stroke="#333" /></svg>
        </div>
      </div>
      <div className="flex h-[762px] flex-col border-y-[3px] border-r-[5px] border-l-[5px] border-[#ececec] bg-[#f0f0f0]">
        <div className="h-[3px] shrink-0 border-b border-[#555] bg-[#999]" />
        <div className="flex h-[716px] shrink-0">
          <Drawing />
          <div className="flex h-full w-4 shrink-0 justify-center bg-[#f0f0f0]">
            <div className="mt-[453px] ml-[2px] h-[17px] w-[2px] bg-[#858585]" />
          </div>
        </div>
        <div className="h-4 shrink-0 bg-[#f0f0f0] pt-[7px]">
          <div className="ml-[633px] h-[2px] w-[17px] bg-[#858585]" />
        </div>
        <div className="flex h-[18px] shrink-0 bg-gradient-to-b from-[#4a4a4a] via-[#707070] to-[#7c7c7c]">
          <div className="mt-[3px] flex gap-[3px]">
            {["M2 1v8M8 1v8L3 5z", "M7 1v8L3 5z", "M3 1v8l4-4z", "M2 1v8l5-4zM8 1v8"].map((p) => (
              <div key={p} className="flex h-[14px] w-[13px] items-center justify-center bg-[#e8e8e8]">
                <svg width="10" height="10" viewBox="0 0 10 10"><path d={p} fill="#444" stroke="#444" strokeWidth="1" /></svg>
              </div>
            ))}
          </div>
          <div className="ml-[6px] flex h-[18px] w-[56px] items-center bg-gradient-to-b from-white to-[#dfe3ea] pt-px pl-2 [clip-path:polygon(0_0,100%_0,76%_100%,4%_100%)]">
            <T t="Model" size={12} w={34} className="font-bold" />
          </div>
          <div className="-ml-[11px] flex h-[18px] w-[62px] items-center bg-[#c3c9d2] pt-px pl-[10px] [clip-path:polygon(18%_0,100%_0,78%_100%,0_100%)]">
            <T t="Sheet 1" size={11.3} />
          </div>
        </div>
      </div>
    </div>
  );
}

/* ---------- page ---------- */

const MENU: [string, number][] = [
  ["File", 33], ["Edit", 35], ["Select", 45], ["Snaps", 46], ["Tools", 43], ["Actions", 53], ["Commands", 72], ["Auto Draw", 70], ["Roof Planes", 76], ["Wizards", 56],
  ["Hydraulics", 68], ["Finish", 46], ["Alerts", 44], ["Listing", 49], ["Parts Database", 91], ["AutoPREP", 65], ["Settings", 57], ["View", 40], ["Window", 59], ["Help", 40],
];

export default function App() {
  return (
    <div className="relative flex h-[1032px] w-[1920px] flex-col overflow-hidden bg-[#505050] font-['Open_Sans','Noto_Sans',sans-serif] text-[11.5px] text-black">
      <div className="flex h-[23px] shrink-0 items-center bg-[linear-gradient(90deg,#e8f5f6,#eaf5f4_50%,#f8f0ea_66%,#f0f4ee_78%)] pl-[2px]">
        <Icon n="app" w={16} h={17} />
        <T t="AutoSPRINK® 2023 Platinum - C:\Users\B.Chambers\Desktop\AutomationTesting\SmokeTesting\SPRINK Smoke Testing Files\Match Elevation.cad - [Match Elevation.cad]" w={892} className="ml-[6px] text-[12px]" />
        <span className="flex-1" />
        <svg width="100" height="12" viewBox="0 0 100 12" className="mr-[20px] -mt-[2px]" fill="none" stroke="#111">
          <path d="M0 6.500h9M45.500 3.500h6v7h-6zM47.500 3V1.500h6V9H52M90 1.500l9 9M99 1.500l-9 9" />
        </svg>
      </div>
      <div className="flex h-[23px] shrink-0 items-center bg-[#505050] pl-[2px] text-white">
        <Icon n="doc0" w={17} h={15} />
        <div className="w-[10px]" />
        {MENU.map(([t, w]) => (
          <div key={t} className="shrink-0" style={{ width: w }}>
            <T t={t} size={11.6} />
          </div>
        ))}
        <svg width="42" height="10" viewBox="0 0 42 10" className="mt-1 mr-[4px] ml-auto" fill="none" stroke="#aab4c6" strokeWidth="1.5">
          <path d="M1 8.500h6M15 4h6v5h-6zM17 3V1h7v5h-2M34 1l6 8M40 1l-6 8" />
        </svg>
      </div>
      <div className="flex h-[46px] shrink-0 pb-px">
        <Bar from={0} to={687} items={ROW1A} />
        <div className="w-px" />
        <Bar from={688} to={1853} items={ROW1B} />
      </div>
      <div className="flex h-[46px] shrink-0 pb-px">
        <Bar from={0} to={1889} items={ROW2} shadow />
      </div>
      <div className="flex h-[46px] shrink-0 pb-px">
        <Bar from={0} to={571} items={ROW3A} />
        <Bar from={571} to={1306} items={ROW3B} />
        <div className="w-px" />
        <Bar from={1307} to={1693} items={ROW3C} />
        <Bar from={1693} to={1909} items={ROW3D} />
      </div>

      <div className="flex h-[848px] shrink-0">
        <div className="flex w-[1873px] shrink-0 flex-col">
          <div className="flex h-[782px] shrink-0 overflow-hidden">
            <LayersPanel />
            <DocumentArea />
          </div>
          <div className="flex h-[20px] shrink-0 items-center bg-[linear-gradient(#3d4150,#3d4150_42%,#2e2d2b_43%)] pl-1 text-white">
            <T t="Add all pipes to the selection." size={11.9} className="mt-1" />
            <div className="mt-1 ml-auto flex">
              <div className="flex w-[56px] items-center border-l border-[#777] pl-1"><T t="0 selected" w={51} /></div>
              <div className="w-[5px] border-l border-[#777]" />
              <div className="w-[6px] border-l border-[#777]" />
              <div className="w-[6px] border-l border-[#777]" />
              <div className="flex w-[65px] items-center border-l border-[#777] pl-[3px]"><T t="ø 2 (2.1570)" w={58} /></div>
              <div className="flex w-[33px] items-center border-l border-[#777] pl-[3px]"><T t="# Off" /></div>
              <div className="flex w-[32px] items-center border-l border-[#777] pl-[3px]"><T t="Foot" /></div>
            </div>
          </div>
          <div className="flex h-[45px] shrink-0">
            <Bar from={0} to={627} items={BOT1} />
            <div className="w-px" />
            <Bar from={628} to={769} items={BOT2} />
            <Bar from={769} to={1856} items={BOT3} />
          </div>
        </div>
        <div className="flex w-[47px] shrink-0 flex-col">
          <Dock from={184} to={417} items={[{ y: 200, el: <Vert t="Import DWG" w={66} /> }, vi(275, "dwg"), vi(317, "docs2"), vi(359, "cubes")]} />
          <Dock from={417} to={717} items={[vi(433, "v1"), vi(475, "v2"), sep(514), vi(522, "v3"), vi(567, "v4"), sep(606), vi(617, "v5"), vi(660, "v6")]} />
          <Dock
            from={717}
            to={979}
            items={[
              { y: 733, el: <Vert t="GLSL" w={31} /> },
              {
                y: 767,
                el: (
                  <div className="flex h-[63px] w-[43px] justify-center border border-[#8c9bb0] bg-[linear-gradient(#fbdcb8,#fcc68c_20%,#ffa84c_35%,#fdb869_55%,#ffe98e)] pt-[6px]">
                    <Vert t="OpenGL®" w={54} />
                  </div>
                ),
              },
              vi(837, "monL"), vi(878, "monR"), vi(920, "props"),
            ]}
          />
        </div>
      </div>

      <Menu items={CONTEXT} className="top-[494px] left-[522px] w-[298px]" />
      <Menu items={SELECT} className="top-[146px] left-[815px] w-[313px]" />
      <EveryMenu />
      <Menu items={PIPES} className="top-[600px] left-[1341px] w-[173px]" />
    </div>
  );
}
